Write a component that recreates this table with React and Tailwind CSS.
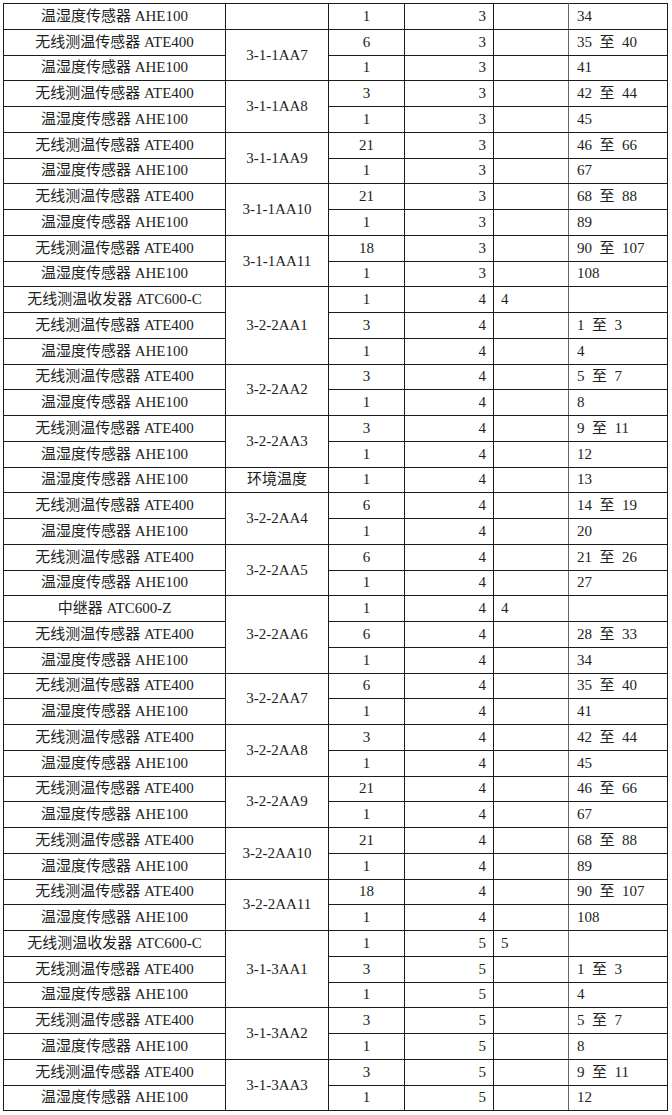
// Sensor allocation table: device, cabinet (merged), qty, channel, gateway, serial range.
const ATE = "无线测温传感器 ATE400";
const AHE = "温湿度传感器 AHE100";

// pair of ATE400 + AHE100 rows under one cabinet
const pair = (cab, n, ch, range, last) => ({
  cab,
  rows: [
    [ATE, n, ch, "", range],
    [AHE, "1", ch, "", last],
  ],
});

// three rows: transceiver/relay first, then the pair
const trio = (cab, head, ch, n, range, last) => ({
  cab,
  rows: [
    [head, "1", ch, ch, ""],
    [ATE, n, ch, "", range],
    [AHE, "1", ch, "", last],
  ],
});

const groups = [
  { cab: "", rows: [[AHE, "1", "3", "", "34"]] },
  pair("3-1-1AA7", "6", "3", "35 至 40", "41"),
  pair("3-1-1AA8", "3", "3", "42 至 44", "45"),
  pair("3-1-1AA9", "21", "3", "46 至 66", "67"),
  pair("3-1-1AA10", "21", "3", "68 至 88", "89"),
  pair("3-1-1AA11", "18", "3", "90 至 107", "108"),
  trio("3-2-2AA1", "无线测温收发器 ATC600-C", "4", "3", "1 至 3", "4"),
  pair("3-2-2AA2", "3", "4", "5 至 7", "8"),
  pair("3-2-2AA3", "3", "4", "9 至 11", "12"),
  { cab: "环境温度", rows: [[AHE, "1", "4", "", "13"]] },
  pair("3-2-2AA4", "6", "4", "14 至 19", "20"),
  pair("3-2-2AA5", "6", "4", "21 至 26", "27"),
  trio("3-2-2AA6", "中继器 ATC600-Z", "4", "6", "28 至 33", "34"),
  pair("3-2-2AA7", "6", "4", "35 至 40", "41"),
  pair("3-2-2AA8", "3", "4", "42 至 44", "45"),
  pair("3-2-2AA9", "21", "4", "46 至 66", "67"),
  pair("3-2-2AA10", "21", "4", "68 至 88", "89"),
  pair("3-2-2AA11", "18", "4", "90 至 107", "108"),
  trio("3-1-3AA1", "无线测温收发器 ATC600-C", "5", "3", "1 至 3", "4"),
  pair("3-1-3AA2", "3", "5", "5 至 7", "8"),
  pair("3-1-3AA3", "3", "5", "9 至 11", "12"),
];

const td = "border border-[#1c1c1c] p-0 leading-none whitespace-nowrap";

export default function App() {
  return (
    <div className="min-h-[1115px] w-[672px] bg-white pl-[3px] pt-[3px]">
      <table
        className="table-fixed border-collapse text-[15px] text-[#221e1b]"
        style={{ fontFamily: '"Liberation Serif", "Noto Sans CJK SC", serif' }}
      >
        <colgroup>
          <col className="w-[222px]" />
          <col className="w-[103px]" />
          <col className="w-[76px]" />
          <col className="w-[89px]" />
          <col className="w-[75px]" />
          <col className="w-[99px]" />
        </colgroup>
        <tbody>
          {groups.map((g, gi) =>
            g.rows.map((r, ri) => (
              <tr key={`${gi}-${ri}`} className="h-[25.75px]">
                <td className={`${td} text-center`}>{r[0]}</td>
                {ri === 0 && (
                  <td className={`${td} text-center`} rowSpan={g.rows.length}>
                    {g.cab}
                  </td>
                )}
                <td className={`${td} text-center`}>{r[1]}</td>
                <td className={`${td} text-right pr-[7px]`}>{r[2]}</td>
                <td className={`${td} text-left pl-[7px] border-r-[#666]`}>{r[3]}</td>
                <td className={`${td} text-left pl-[8px] border-l-[#666] [word-spacing:3.75px]`}>
                  {r[4]}
                </td>
              </tr>
            ))
          )}
        </tbody>
      </table>
    </div>
  );
}
